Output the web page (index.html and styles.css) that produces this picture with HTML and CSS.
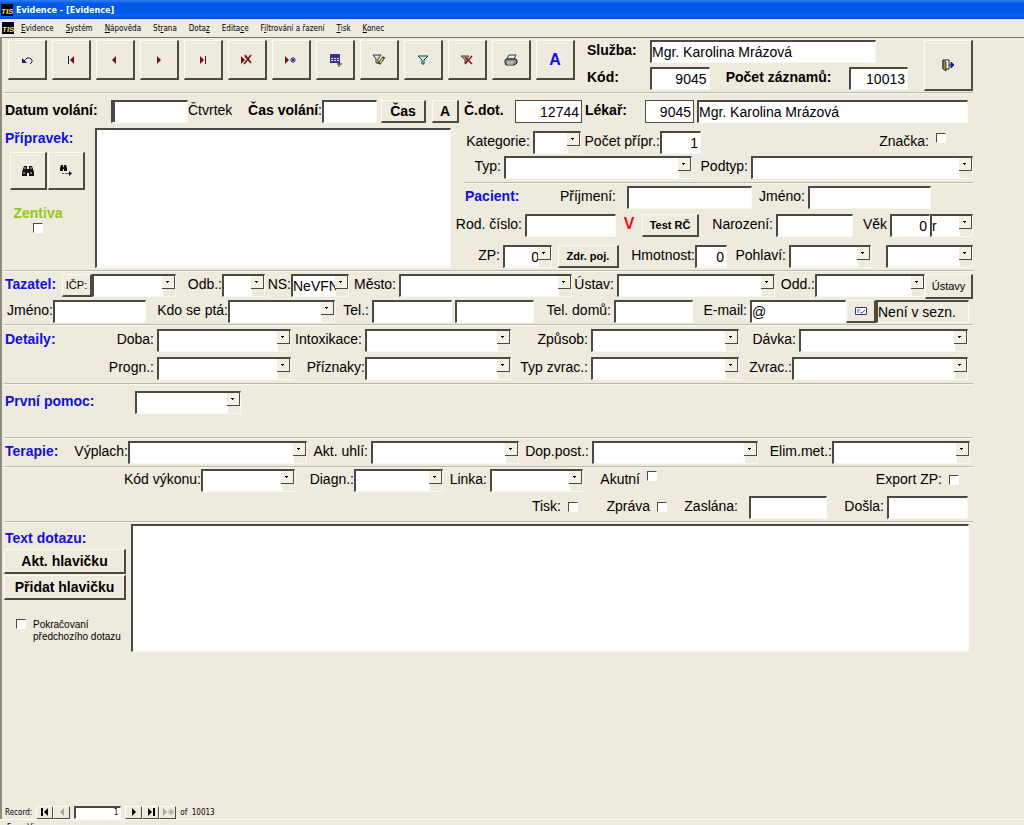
FILE: index.html
```
<!DOCTYPE html>
<html lang="cs">

<head>
    <meta charset="UTF-8">
    <meta name="viewport" content="width=device-width, initial-scale=1.0">
    <title>Evidence - [Evidence]</title>
    <link rel="stylesheet" href="styles.css">
</head>

<body>
    <header class="titlebar">
        <svg class="logo" viewBox="0 0 12 12"><rect width="12" height="12" fill="#000"/><text x="0" y="10" class="logo-text">TIS</text></svg>
        <h1>Evidence - [Evidence]</h1>
    </header>
    <nav class="menu">
        <svg class="logo" viewBox="0 0 12 12"><rect width="12" height="12" fill="#000"/><text x="0" y="10" class="logo-text">TIS</text></svg>
        <a href="#"><u>E</u>vidence</a>
        <a href="#"><u>S</u>ystém</a>
        <a href="#"><u>N</u>ápověda</a>
        <a href="#">St<u>r</u>ana</a>
        <a href="#">Dota<u>z</u></a>
        <a href="#">Edita<u>c</u>e</a>
        <a href="#">F<u>i</u>ltrování a řazení</a>
        <a href="#"><u>T</u>isk</a>
        <a href="#"><u>K</u>onec</a>
    </nav>

    <main class="window">
        <form class="form">
            <div class="toolbar">
                <button type="button" class="tool" aria-label="Zpět"><svg viewBox="0 0 16 16"><path d="M3 6v5h5z" fill="#1b1b78"/><path d="M5 9l3-3h3l2 2v2l-2 2" fill="none" stroke="#1b1b78"/></svg></button>
                <button type="button" class="tool" aria-label="První"><svg viewBox="0 0 16 16"><path d="M5 4h1v8H5z" fill="#1b1b78"/><path d="M11 4v8L7 8z" fill="#7b0f0f"/></svg></button>
                <button type="button" class="tool" aria-label="Předchozí"><svg viewBox="0 0 16 16"><path d="M9 4v8L5 8z" fill="#7b0f0f"/></svg></button>
                <button type="button" class="tool" aria-label="Další"><svg viewBox="0 0 16 16"><path d="M6 4v8l4-4z" fill="#7b0f0f"/></svg></button>
                <button type="button" class="tool" aria-label="Poslední"><svg viewBox="0 0 16 16"><path d="M5 4v8l4-4z" fill="#7b0f0f"/><path d="M10 4h1v8h-1z" fill="#1b1b78"/></svg></button>
                <button type="button" class="tool" aria-label="Smazat"><svg viewBox="0 0 16 16"><path d="M2 4v8l4-4z" fill="#7b0f0f"/><path d="M12 3L5 12M6 4l6 7M6 3l6 8" stroke="#7b0f0f" stroke-width="1.5" fill="none"/></svg></button>
                <button type="button" class="tool" aria-label="Nový"><svg viewBox="0 0 16 16"><path d="M2 4v8l4-4z" fill="#7b0f0f"/><path d="M10 5v6M7 8h6M8 6l4 4M12 6l-4 4" stroke="#26268c"/></svg></button>
                <button type="button" class="tool" aria-label="Tabulka"><svg viewBox="0 0 16 16"><path d="M3 2h10v9H3z" fill="#35358c"/><path d="M4 6h2v1H4zM7 6h2v1H7zM10 6h2v1h-2zM4 8h2v1H4zM7 8h2v1H7zM10 8h2v1h-2z" fill="#eee"/><path d="M12 10v5M10 12h5" stroke="#222"/></svg></button>
                <button type="button" class="tool" aria-label="Upravit filtr"><svg viewBox="0 0 16 16"><path d="M2 3h8L7 7v4H5V7z" fill="#ddd" stroke="#333"/><path d="M13 5L8 12" stroke="#222" stroke-width="3"/><path d="M12 6L9 11" stroke="#d8d04a" stroke-width="1.5"/></svg></button>
                <button type="button" class="tool" aria-label="Filtr"><svg viewBox="0 0 16 16"><path d="M3 4h10L9 8v4H7V8z" fill="#c8ece8" stroke="#173f42"/></svg></button>
                <button type="button" class="tool" aria-label="Zrušit filtr"><svg viewBox="0 0 16 16"><path d="M2 4h8L7 8v3H6V8z" fill="#bbb" stroke="#444"/><path d="M13 4L6 12M6 5l7 7" stroke="#8c1212" stroke-width="1.5"/></svg></button>
                <button type="button" class="tool" aria-label="Tisk"><svg viewBox="0 0 16 16"><path d="M6 3h7l-2 4H4z" fill="#eee" stroke="#333"/><path d="M3 7h10l1 1v3l-3 2H3l-1-2V8z" fill="#888" stroke="#222"/><path d="M4 10h7M4 12h6" stroke="#ddd"/></svg></button>
                <button type="button" class="tool tool-a">A</button>

                <div class="service">
                    <div class="row row-service">
                        <label class="strong start" for="sluzba">Služba:</label>
                        <input class="field" id="sluzba" value="Mgr. Karolina Mrázová">
                    </div>
                    <div class="row row-code">
                        <label class="strong start" for="kod">Kód:</label>
                        <input class="field num" id="kod" value="9045">
                        <label class="strong" for="pocet">Počet záznamů:</label>
                        <input class="field num" id="pocet" value="10013">
                    </div>
                </div>
                <button type="button" class="tool exit" aria-label="Konec"><svg viewBox="0 0 16 16"><path d="M3 3h6v9H3z" fill="#fff" stroke="#222"/><path d="M3 3l3 2v9l-3-2z" fill="#96963a" stroke="#333"/><path d="M9 8h5M11 5l3 3-3 3z" fill="#1c1c94" stroke="#1c1c94"/></svg></button>
            </div>

            <section class="band band-call">
                <div class="row row-call">
                    <label class="strong first" for="datum">Datum volání:</label>
                    <input class="field caret" id="datum">
                    <span class="text">Čtvrtek</span>
                    <label class="strong tight" for="cas">Čas volání<span class="light">:</span></label>
                    <input class="field" id="cas">
                    <button type="button" class="btn btn-strong">Čas</button>
                    <button type="button" class="btn btn-strong">A</button>
                    <label class="strong start" for="cdot">Č.dot.</label>
                    <input class="field boxed num" id="cdot" value="12744">
                    <label class="strong start" for="lekar">Lékař:</label>
                    <input class="field boxed num" id="lekar" value="9045">
                    <input class="field spaced" aria-label="Jméno lékaře" value="Mgr. Karolina Mrázová">
                </div>

                <div class="product">
                    <div class="product-side">
                        <label class="title" for="pripravek">Přípravek:</label>
                        <div class="finders">
                            <button type="button" class="tool" aria-label="Hledat"><svg viewBox="0 0 16 16"><path d="M4 3h3v3h2V3h3l2 6v4h-5v-3H7v3H2V9z" fill="#111"/><path d="M5 4v2M11 4v2M4 9v2M11 9v2" stroke="#ddd"/></svg></button>
                            <button type="button" class="tool" aria-label="Hledat další"><svg viewBox="0 0 16 16"><path d="M3 2h2v2h1V2h2l1 3v3H6V6H5v2H2V5z" fill="#111"/><path d="M4 10.500h2M7 10.500h5" stroke="#55a"/><path d="M11 8v5l3-2.500z" fill="#111"/></svg></button>
                        </div>
                        <label class="zentiva">Zentiva<input type="checkbox" class="check"></label>
                    </div>
                    <textarea class="field list" id="pripravek"></textarea>
                    <div class="patient">
                        <div class="row row-category">
                            <label for="kategorie">Kategorie:</label>
                            <span class="combo"><select id="kategorie"><option></option></select></span>
                            <label class="tight" for="pocetpripr">Počet přípr.:</label>
                            <input class="field num" id="pocetpripr" value="1">
                            <label for="znacka">Značka:</label>
                            <input type="checkbox" class="check high" id="znacka">
                        </div>
                        <div class="row row-type">
                            <label for="typ">Typ:</label>
                            <span class="combo"><select id="typ"><option></option></select></span>
                            <label for="podtyp">Podtyp:</label>
                            <span class="combo"><select id="podtyp"><option></option></select></span>
                        </div>
                        <div class="row row-name">
                            <h2 class="title">Pacient:</h2>
                            <label class="loose" for="prijmeni">Příjmení:</label>
                            <input class="field" id="prijmeni">
                            <label for="jmenopac">Jméno:</label>
                            <input class="field" id="jmenopac">
                        </div>
                        <div class="row row-birth">
                            <label for="rc">Rod. číslo:</label>
                            <input class="field" id="rc">
                            <span class="valid">V</span>
                            <button type="button" class="btn btn-bold">Test RČ</button>
                            <label for="narozeni">Narození:</label>
                            <input class="field" id="narozeni">
                            <label for="vek">Věk</label>
                            <input class="field num" id="vek" value="0">
                            <span class="combo"><select aria-label="Jednotka věku"><option>r</option></select></span>
                        </div>
                        <div class="row row-insurance">
                            <label for="zp">ZP:</label>
                            <span class="combo"><select class="right" id="zp"><option>0</option></select></span>
                            <button type="button" class="btn btn-bold btn-zdr">Zdr. poj.</button>
                            <label class="tight" for="hmotnost">Hmotnost:</label>
                            <input class="field num" id="hmotnost" value="0">
                            <label for="pohlavi">Pohlaví:</label>
                            <span class="combo"><select id="pohlavi"><option></option></select></span>
                            <span class="combo last"><select aria-label="Upřesnění pohlaví"><option></option></select></span>
                        </div>
                    </div>
                </div>
            </section>

            <section class="band band-caller">
                <div class="row row-caller">
                    <h2 class="title">Tazatel:</h2>
                    <button type="button" class="btn btn-icp">IČP:</button>
                    <span class="combo"><select aria-label="IČP"><option></option></select></span>
                    <label class="tight" for="odb">Odb.:</label>
                    <span class="combo"><select id="odb"><option></option></select></span>
                    <label class="tight" for="ns">NS:</label>
                    <span class="combo"><select id="ns"><option>NeVFN</option></select></span>
                    <label for="mesto">Město:</label>
                    <span class="combo"><select id="mesto"><option></option></select></span>
                    <label for="ustav">Ústav:</label>
                    <span class="combo"><select id="ustav"><option></option></select></span>
                    <label class="tight" for="odd">Odd.:</label>
                    <span class="combo"><select id="odd"><option></option></select></span>
                    <button type="button" class="btn btn-ustavy">Ústavy</button>
                </div>
                <div class="row row-contact">
                    <label class="tight" for="jmeno">Jméno:</label>
                    <input class="field" id="jmeno">
                    <label class="tight" for="kdo">Kdo se ptá:</label>
                    <span class="combo"><select id="kdo"><option></option></select></span>
                    <label for="tel">Tel.:</label>
                    <input class="field" id="tel">
                    <input class="field spaced" aria-label="Druhý telefon">
                    <label for="teldomu">Tel. domů:</label>
                    <input class="field" id="teldomu">
                    <label for="email">E-mail:</label>
                    <input class="field" id="email" value="@">
                    <button type="button" class="btn btn-mail" aria-label="Poslat e-mail"><svg viewBox="0 0 12 10"><path d="M.5 1.500h11v7H.5z" fill="#fff" stroke="#33337a"/><path d="M2 4h3M2 6h2M5 6l2 1 3-3" stroke="#4a4ac0" fill="none"/></svg></button>
                    <input class="field locked" aria-label="Seznam" value="Není v sezn." readonly>
                </div>
            </section>

            <section class="band band-details">
                <div class="row row-details">
                    <h2 class="title">Detaily:</h2>
                    <label for="doba">Doba:</label>
                    <span class="combo"><select id="doba"><option></option></select></span>
                    <label for="intox">Intoxikace:</label>
                    <span class="combo"><select id="intox"><option></option></select></span>
                    <label for="zpusob">Způsob:</label>
                    <span class="combo"><select id="zpusob"><option></option></select></span>
                    <label for="davka">Dávka:</label>
                    <span class="combo"><select id="davka"><option></option></select></span>
                </div>
                <div class="row row-prognosis">
                    <label for="progn">Progn.:</label>
                    <span class="combo"><select id="progn"><option></option></select></span>
                    <label class="tight" for="priznaky">Příznaky:</label>
                    <span class="combo"><select id="priznaky"><option></option></select></span>
                    <label for="typzvrac">Typ zvrac.:</label>
                    <span class="combo"><select id="typzvrac"><option></option></select></span>
                    <label class="tight" for="zvrac">Zvrac.:</label>
                    <span class="combo"><select id="zvrac"><option></option></select></span>
                </div>
            </section>

            <section class="band band-aid">
                <div class="row row-aid">
                    <label class="title" for="pomoc">První pomoc:</label>
                    <span class="combo"><select id="pomoc"><option></option></select></span>
                </div>
            </section>

            <section class="band band-therapy">
                <div class="row row-therapy">
                    <h2 class="title">Terapie:</h2>
                    <label class="tight" for="vyplach">Výplach:</label>
                    <span class="combo"><select id="vyplach"><option></option></select></span>
                    <label for="uhli">Akt. uhlí:</label>
                    <span class="combo"><select id="uhli"><option></option></select></span>
                    <label for="doppost">Dop.post.:</label>
                    <span class="combo"><select id="doppost"><option></option></select></span>
                    <label class="tight" for="elim">Elim.met.:</label>
                    <span class="combo"><select id="elim"><option></option></select></span>
                </div>
            </section>

            <section class="band band-code">
                <div class="row row-diagnosis">
                    <label class="tight" for="vykon">Kód výkonu:</label>
                    <span class="combo"><select id="vykon"><option></option></select></span>
                    <label class="tight" for="diagn">Diagn.:</label>
                    <span class="combo"><select id="diagn"><option></option></select></span>
                    <label for="linka">Linka:</label>
                    <span class="combo"><select id="linka"><option></option></select></span>
                    <label for="akutni">Akutní</label>
                    <input type="checkbox" class="check high" id="akutni">
                    <label for="export">Export ZP:</label>
                    <input type="checkbox" class="check" id="export">
                </div>
                <div class="row row-report">
                    <label for="tisk">Tisk:</label>
                    <input type="checkbox" class="check" id="tisk">
                    <label for="zprava">Zpráva</label>
                    <input type="checkbox" class="check" id="zprava">
                    <label class="loose" for="zaslana">Zaslána:</label>
                    <input class="field" id="zaslana">
                    <label for="dosla">Došla:</label>
                    <input class="field" id="dosla">
                </div>
            </section>

            <section class="band band-query">
                <div class="query">
                    <div class="query-side">
                        <label class="title" for="dotaz">Text dotazu:</label>
                        <button type="button" class="btn btn-head">Akt. hlavičku</button>
                        <button type="button" class="btn btn-head">Přidat hlavičku</button>
                        <label class="follow"><input type="checkbox" class="check"><span>Pokračovaní předchozího dotazu</span></label>
                    </div>
                    <textarea class="field list" id="dotaz"></textarea>
                </div>
            </section>
        </form>

        <div class="records">
            <label for="record">Record:</label>
            <div class="nav-group">
                <button type="button" class="nav" aria-label="První záznam"><svg viewBox="0 0 12 10"><path d="M2 1h2v8H2zM9 1v8L5 5z"/></svg></button>
                <button type="button" class="nav" aria-label="Předchozí záznam" disabled><svg viewBox="0 0 12 10"><path d="M8 1v8L4 5z"/></svg></button>
            </div>
            <input class="record-no" id="record" value="1">
            <div class="nav-group">
                <button type="button" class="nav" aria-label="Další záznam"><svg viewBox="0 0 12 10"><path d="M4 1v8l4-4z"/></svg></button>
                <button type="button" class="nav" aria-label="Poslední záznam"><svg viewBox="0 0 12 10"><path d="M3 1v8l4-4zM8 1h2v8H8z"/></svg></button>
                <button type="button" class="nav" aria-label="Nový záznam" disabled><svg viewBox="0 0 12 10"><path d="M1 1v8l4-4z"/><path d="M9 2v6M6 5h6M7 3l4 4M11 3L7 7" stroke="#aaa799"/></svg></button>
            </div>
            <span>of&nbsp; 10013</span>
        </div>
    </main>
    <footer class="status">Form View</footer>
</body>

</html>
```
FILE: styles.css
```
* {
    box-sizing: border-box;
}
body {
    margin: 0;
    height: 100vh;
    display: flex;
    flex-direction: column;
    overflow: hidden;
    background-color: #eeeade;
    color: #000;
    font-family: "Liberation Sans", Arial, sans-serif;
    font-size: 14px;
    line-height: 20px;
}
input, select, textarea, button {
    font: inherit;
    color: inherit;
    margin: 0;
    border-radius: 0;
    min-width: 0;
}

/* title bar and menu */
.titlebar {
    display: flex;
    align-items: center;
    gap: 3px;
    flex: none;
    height: 19px;
    padding-left: 1px;
    background: linear-gradient(#2b7df0, #0058e4 20%, #0058e8 60%, #0664f8 85%, #0048c8);
}
.titlebar h1 {
    margin: 0;
    color: #fff;
    font: bold 9px "DejaVu Sans Condensed", "DejaVu Sans", sans-serif;
}
.logo {
    width: 12px;
    height: 12px;
    flex: none;
}
.logo-text {
    fill: #f0e63c;
    font: italic bold 8px "Liberation Sans", sans-serif;
}
.menu {
    display: flex;
    align-items: center;
    gap: 12px;
    flex: none;
    height: 18px;
    padding-left: 2px;
    font: 8px "DejaVu Sans Condensed", "DejaVu Sans", sans-serif;
}
.menu .logo {
    margin-right: -5px;
}
.menu a {
    color: #000;
    text-decoration: none;
}

/* window */
.window {
    flex: 1;
    min-height: 0;
    display: flex;
    flex-direction: column;
    border-top: 1px solid #77756a;
    border-left: 2px solid #8f8c80;
}
.form {
    flex: 1;
    padding: 2px 51px 0 2px;
}
.band {
    border-top: 1px solid #bdb9aa;
    box-shadow: inset 0 1px #f9f7f0;
}
.row {
    display: grid;
    height: 23px;
}
.row label, .text {
    padding-right: 3px;
    text-align: right;
    white-space: nowrap;
}
.row .start, .row .first {
    padding-left: 3px;
    text-align: left;
}
.row .first {
    padding-left: 1px;
}
.row .tight {
    padding-right: 0;
}
.row .loose {
    padding-right: 11px;
}
.strong {
    font-weight: bold;
}
.light {
    font-weight: normal;
}
.row .title, .title {
    margin: 0;
    padding-left: 1px;
    color: #1010e0;
    font-size: 14px;
    font-weight: bold;
    text-align: left;
    white-space: nowrap;
}

/* fields */
.field, .combo {
    height: 23px;
    width: 100%;
    padding: 0 2px 0 0;
    border: 1px solid #faf8f2;
    border-top: 2px solid #4b4a42;
    border-left: 2px solid #4b4a42;
    background-color: #fff;
    outline: none;
}
.field {
    line-height: 19px;
}
.num {
    text-align: right;
}
.boxed {
    border: 1px solid #4b4a42;
}
.caret {
    box-shadow: inset 2px 0 #4b4a42;
}
.locked {
    background-color: #eeeade;
}
.spaced {
    width: auto;
    margin-left: 3px;
}
.list {
    display: block;
    height: auto;
    resize: none;
}
.combo {
    position: relative;
    display: block;
    min-width: 0;
    padding: 0;
}
.combo select {
    appearance: none;
    display: block;
    width: 100%;
    height: 19px;
    padding: 0 12px 0 0;
    border: 0;
    outline: none;
    background: none;
}
.combo .right {
    text-align: right;
    text-align-last: right;
}
/* drop button with the flat strip under it */
.combo::before {
    content: "";
    position: absolute;
    top: 0;
    right: 0;
    width: 12px;
    height: 100%;
    background-color: #eeeade;
    pointer-events: none;
}
.combo::after {
    content: "";
    position: absolute;
    top: 0;
    right: 0;
    width: 12px;
    height: 12px;
    border-right: 1px solid #4b4a42;
    border-bottom: 1px solid #4b4a42;
    background: linear-gradient(#000, #000) 4px 5px / 3px 1px no-repeat, linear-gradient(#000, #000) 5px 6px / 1px 1px no-repeat, #f3f0e6;
    pointer-events: none;
}
.check {
    appearance: none;
    width: 10px;
    height: 10px;
    border: 1px solid #fff;
    border-top-color: #4b4a42;
    border-left-color: #4b4a42;
    background-color: #fff;
}
.row .check {
    margin: 6px 0 0 4px;
}
.row .high {
    margin-top: 2px;
}

/* buttons */
.btn, .tool {
    display: flex;
    align-items: center;
    justify-content: center;
    padding: 0;
    border: 1px solid #fbfaf4;
    border-right: 2px solid #4b4a42;
    border-bottom: 2px solid #4b4a42;
    background-color: #eeeade;
    white-space: nowrap;
}
.btn {
    height: 23px;
    font-size: 11px;
}
.btn-strong {
    margin: 0 2px 0 4px;
    font-size: 14px;
    font-weight: bold;
}
.btn-bold {
    font-weight: bold;
}
.btn-zdr {
    margin-left: 6px;
}
.btn-mail svg {
    width: 12px;
    height: 10px;
}
.tool {
    flex: none;
    width: 39px;
    height: 40px;
}
.tool svg {
    width: 16px;
    height: 16px;
}
.tool-a {
    color: #1010f0;
    font-size: 16px;
    font-weight: bold;
}

/* toolbar */
.toolbar {
    display: flex;
    gap: 5px;
    padding: 0 0 1px 4px;
}
.service {
    flex: 1;
    display: flex;
    flex-direction: column;
    gap: 4px;
    padding-left: 4px;
}
.row-service {
    grid-template-columns: 66px 227fr 32px;
}
.row-code {
    grid-template-columns: 66px 60fr 139px 60fr;
}
.row-code .strong:nth-of-type(2) {
    padding-right: 17px;
}
.exit {
    width: 49px;
    height: 51px;
    margin-left: 11px;
}

/* call and patient */
.band-call {
    padding: 7px 0 2px;
}
.row-call {
    grid-template-columns: 107px 77fr 46px 88px 55fr 51px 33px 54px 67fr 63px 49fr 274fr 5px;
}
.product {
    display: grid;
    grid-template-columns: 91px 356fr 522fr;
    margin-top: 5px;
}
.product-side {
    display: flex;
    flex-direction: column;
}
.finders {
    display: flex;
    gap: 1px;
    margin: 4px 0 0 6px;
}
.finders .tool {
    width: 37px;
    height: 38px;
}
.zentiva {
    display: flex;
    flex-direction: column;
    align-items: center;
    width: 52px;
    margin: 13px 0 0 8px;
    color: #94c814;
    font-weight: bold;
}
.patient {
    padding-top: 3px;
}
.row-category {
    grid-template-columns: 82px 48fr 79px 41fr 231fr 41px;
    margin-bottom: 2px;
}
.row-type {
    grid-template-columns: 53px 188fr 59px 222fr;
}
.row-name {
    grid-template-columns: 67px 96px 125fr 56px 123fr 42px;
    height: 29px;
    margin: 3px 0 3px 13px;
    padding-top: 3px;
    border-top: 1px solid #bdb9aa;
    box-shadow: inset 0 1px #f9f7f0;
}
.row-birth {
    grid-template-columns: 74px 91fr 26px 57px 77px 77fr 37px 40fr 43fr;
    margin-bottom: 8px;
}
.row-insurance {
    grid-template-columns: 52px 49fr 67px 76px 32fr 62px 82fr 15px 87fr;
}
.last {
    grid-column: -2;
}
.valid {
    color: #f01010;
    font-size: 16px;
    font-weight: bold;
    text-align: center;
}

/* caller */
.band-caller {
    padding: 3px 0 1px;
}
.row-caller {
    grid-template-columns: 58px 30px 84fr 46px 43fr 26px 58fr 50px 173fr 45px 158fr 40px 110fr 48px;
    margin-bottom: 3px;
}
.btn-ustavy {
    height: 25px;
}
.row-contact {
    grid-template-columns: 49px 93fr 82px 107fr 37px 80fr 82fr 80px 79fr 57px 96fr 30px 93fr 4px;
}

/* details, first aid, therapy */
.band-details {
    padding: 4px 0 3px;
}
.row-details {
    grid-template-columns: 51px 102px 134fr 74px 146fr 80px 148fr 60px 169fr 5px;
    margin-bottom: 5px;
}
.row-prognosis {
    grid-template-columns: 153px 134fr 74px 146fr 80px 148fr 53px 176fr 5px;
}
.band-aid {
    padding: 7px 0 23px;
}
.row-aid {
    grid-template-columns: 131px 106fr 732fr;
}
.band-therapy {
    padding: 3px 0 2px;
}
.row-therapy {
    grid-template-columns: 60px 64px 179fr 64px 148fr 73px 166fr 74px 138fr 3px;
}
.band-code {
    padding: 2px 0;
}
.row-diagnosis {
    grid-template-columns: 197px 94fr 59px 89fr 47px 93fr 60px 20px 282fr 28px;
    margin-bottom: 4px;
}
.row-report {
    grid-template-columns: 560fr 24px 65px 24px 72px 78fr 60px 81fr 5px;
}

/* query text */
.band-query {
    padding-top: 2px;
}
.query {
    display: grid;
    grid-template-columns: 127px 1fr 4px;
    min-height: 128px;
}
.query-side {
    display: flex;
    flex-direction: column;
    padding-top: 4px;
}
.btn-head {
    height: 25px;
    margin: 1px 5px 0 0;
    font-size: 14px;
    font-weight: bold;
}
.follow {
    display: flex;
    gap: 7px;
    margin: 19px 0 0 12px;
    font-size: 10px;
    line-height: 12px;
}
.follow .check {
    flex: none;
}

/* record navigator */
.records {
    display: flex;
    align-items: center;
    gap: 4px;
    flex: none;
    height: 14px;
    padding-left: 3px;
    font: 8px "DejaVu Sans Condensed", "DejaVu Sans", sans-serif;
}
.nav-group {
    display: flex;
}
.nav {
    display: flex;
    align-items: center;
    justify-content: center;
    width: 17px;
    height: 13px;
    padding: 0;
    border: 1px solid #fbfaf4;
    border-right-color: #4b4a42;
    border-bottom-color: #4b4a42;
    background-color: #eeeade;
}
.nav svg {
    width: 12px;
    height: 10px;
}
.nav:disabled {
    fill: #aaa799;
}
.record-no {
    width: 47px;
    height: 13px;
    padding: 0 2px;
    border: 1px solid #fff;
    border-top: 2px solid #4b4a42;
    border-left: 2px solid #4b4a42;
    background-color: #fff;
    text-align: right;
}
.status {
    flex: none;
    height: 6px;
    padding: 3px 0 0 7px;
    border-top: 1px solid #fbfaf4;
    overflow: hidden;
    font: 8px "DejaVu Sans Condensed", "DejaVu Sans", sans-serif;
}
```
